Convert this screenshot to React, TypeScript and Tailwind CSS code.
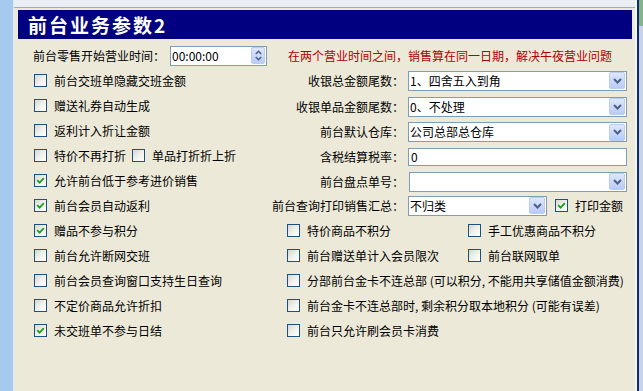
import React from "react";

function Check({ checked = false }: { checked?: boolean }) {
  return (
    <span className="inline-flex w-[13px] h-[13px] shrink-0 items-center justify-center border border-[#1c5180] bg-linear-to-br from-[#d8d8d2] via-[#f0f0ec] to-white">
      {checked && (
        <svg width="9" height="9" viewBox="0 0 9 9">
          <path d="M1.2 4.2 L3.6 6.6 L7.8 2.2" stroke="#21a121" strokeWidth="1.9" fill="none" />
        </svg>
      )}
    </span>
  );
}

function Chevron() {
  return (
    <svg width="9" height="6" viewBox="0 0 9 6">
      <path d="M1 1 L4.5 4.5 L8 1" stroke="#4d6185" strokeWidth="2" fill="none" />
    </svg>
  );
}

function DropBtn() {
  return (
    <span className="ml-auto mr-[1px] flex h-[17px] w-[16px] shrink-0 items-center justify-center rounded-[2px] border border-[#bccbee] bg-linear-to-b from-[#dde7fc] to-[#b9cbf5]">
      <Chevron />
    </span>
  );
}

function Combo({ text = "", w }: { text?: string; w: string }) {
  return (
    <div className={`${w} flex h-[20px] items-center border border-[#7f9db9] bg-white pl-[1px] text-black`}>
      <span className="leading-none">{text}</span>
      <DropBtn />
    </div>
  );
}

function CheckItem({ label, checked = false, className = "" }: { label: string; checked?: boolean; className?: string }) {
  return (
    <div className={`flex items-center gap-[7px] ${className}`}>
      <Check checked={checked} />
      <span className="whitespace-nowrap">{label}</span>
    </div>
  );
}

export default function App() {
  const leftRows: { label: string; checked?: boolean }[] = [
    { label: "前台交班单隐藏交班金额" },
    { label: "赠送礼券自动生成" },
    { label: "返利计入折让金额" },
  ];
  const leftRows2: { label: string; checked?: boolean }[] = [
    { label: "允许前台低于参考进价销售", checked: true },
    { label: "前台会员自动返利", checked: true },
    { label: "赠品不参与积分", checked: true },
    { label: "前台允许断网交班" },
    { label: "前台会员查询窗口支持生日查询" },
    { label: "不定价商品允许折扣" },
    { label: "未交班单不参与日结", checked: true },
  ];

  return (
    <div className="flex h-[391px] w-[643px] overflow-hidden text-[12px] text-black font-['Noto_Sans_CJK_SC',sans-serif]">
      {/* left strip */}
      <div className="h-full w-[14px] shrink-0 border-r border-[#dfe8f4] bg-[#a6c9ef]" />
      {/* middle */}
      <div className="flex h-full w-[621px] shrink-0 flex-col">
        <div className="h-[8px] shrink-0 border-b border-[#a8aaae] bg-[#e9edf4]" />
        <div className="flex flex-1 flex-col bg-[#ece9d8]">
          {/* title */}
          <div className="ml-[4px] mr-[3px] mt-[2px] flex h-[29px] items-center bg-[#000080] pl-[10px]">
            <span className="text-[19px] font-bold leading-none tracking-[2px] text-white font-['Noto_Sans_CJK_SC',serif]">
              前台业务参数2
            </span>
          </div>
          {/* row 1 */}
          <div className="mt-[4px] flex h-[25px] items-center">
            <div className="flex w-[256px] shrink-0 items-center pl-[19px]">
              <span className="w-[137px] shrink-0 whitespace-nowrap">前台零售开始营业时间：</span>
              <div className="flex h-[20px] w-[97px] items-center border border-[#7f9db9] bg-white pl-[1px]">
                <span className="leading-none">00:00:00</span>
                <span className="ml-auto mr-[1px] flex h-[17px] w-[14px] flex-col items-center justify-center gap-[1px] rounded-[2px] border border-[#bccbee] bg-linear-to-b from-[#dde7fc] to-[#b9cbf5]">
                  <svg width="7" height="5" viewBox="0 0 7 5">
                    <path d="M0.8 4 L3.5 1.3 L6.2 4" stroke="#4d6185" strokeWidth="1.6" fill="none" />
                  </svg>
                  <svg width="7" height="5" viewBox="0 0 7 5">
                    <path d="M0.8 1 L3.5 3.7 L6.2 1" stroke="#4d6185" strokeWidth="1.6" fill="none" />
                  </svg>
                </span>
              </div>
            </div>
            <span className="whitespace-nowrap pl-[18px] text-[#b00000]">
              在两个营业时间之间，销售算在同一日期，解决午夜营业问题
            </span>
          </div>
          {/* body */}
          <div className="flex">
            {/* left column */}
            <div className="flex w-[256px] shrink-0 flex-col pl-[20px]">
              {leftRows.map((r) => (
                <div key={r.label} className="flex h-[25px] items-center">
                  <CheckItem label={r.label} checked={r.checked} />
                </div>
              ))}
              <div className="flex h-[25px] items-center">
                <CheckItem label="特价不再打折" />
                <CheckItem label="单品打折折上折" className="ml-[6px]" />
              </div>
              {leftRows2.map((r) => (
                <div key={r.label} className="flex h-[25px] items-center">
                  <CheckItem label={r.label} checked={r.checked} />
                </div>
              ))}
            </div>
            {/* right column */}
            <div className="flex flex-1 flex-col">
              <div className="flex h-[25px] items-center">
                <span className="w-[134px] shrink-0 whitespace-nowrap text-right">收银总金额尾数：</span>
                <div className="ml-[4px]"><Combo w="w-[219px]" text="1、四舍五入到角" /></div>
              </div>
              <div className="flex h-[27px] items-center">
                <span className="w-[134px] shrink-0 whitespace-nowrap text-right">收银单品金额尾数：</span>
                <div className="ml-[4px]"><Combo w="w-[219px]" text="0、不处理" /></div>
              </div>
              <div className="flex h-[24px] items-center">
                <span className="w-[134px] shrink-0 whitespace-nowrap text-right">前台默认仓库：</span>
                <div className="ml-[4px]"><Combo w="w-[219px]" text="公司总部总仓库" /></div>
              </div>
              <div className="flex h-[26px] items-center">
                <span className="w-[134px] shrink-0 whitespace-nowrap text-right">含税结算税率：</span>
                <div className="ml-[4px] flex h-[18px] w-[219px] items-center border border-[#7f9db9] bg-white pl-[2px]">
                  <span className="leading-none">0</span>
                </div>
              </div>
              <div className="flex h-[23px] items-center">
                <span className="w-[134px] shrink-0 whitespace-nowrap text-right">前台盘点单号：</span>
                <div className="ml-[5px]"><Combo w="w-[218px]" /></div>
              </div>
              <div className="flex h-[25px] items-center">
                <span className="w-[134px] shrink-0 whitespace-nowrap text-right">前台查询打印销售汇总：</span>
                <div className="ml-[4px]"><Combo w="w-[139px]" text="不归类" /></div>
                <CheckItem label="打印金额" checked className="ml-[8px]" />
              </div>
              <div className="flex h-[25px] items-center pl-[17px]">
                <CheckItem label="特价商品不积分" className="w-[181px]" />
                <CheckItem label="手工优惠商品不积分" />
              </div>
              <div className="flex h-[25px] items-center pl-[17px]">
                <CheckItem label="前台赠送单计入会员限次" className="w-[181px]" />
                <CheckItem label="前台联网取单" />
              </div>
              <div className="flex h-[25px] items-center pl-[17px]">
                <CheckItem label="分部前台金卡不连总部 (可以积分, 不能用共享储值金额消费)" />
              </div>
              <div className="flex h-[25px] items-center pl-[17px]">
                <CheckItem label="前台金卡不连总部时, 剩余积分取本地积分 (可能有误差)" />
              </div>
              <div className="flex h-[25px] items-center pl-[17px]">
                <CheckItem label="前台只允许刷会员卡消费" />
              </div>
            </div>
          </div>
        </div>
      </div>
      {/* right strip */}
      <div className="flex h-full w-[8px] shrink-0">
        <div className="h-full w-[2px] bg-[#f4f4f0]" />
        <div className="h-full w-[2px] bg-[#0b2a78]" />
        <div className="flex h-full flex-1 flex-col">
          <div className="h-[26px] bg-[#86b486]" />
          <div className="flex-1 bg-[#c9d3e3]" />
        </div>
      </div>
    </div>
  );
}
